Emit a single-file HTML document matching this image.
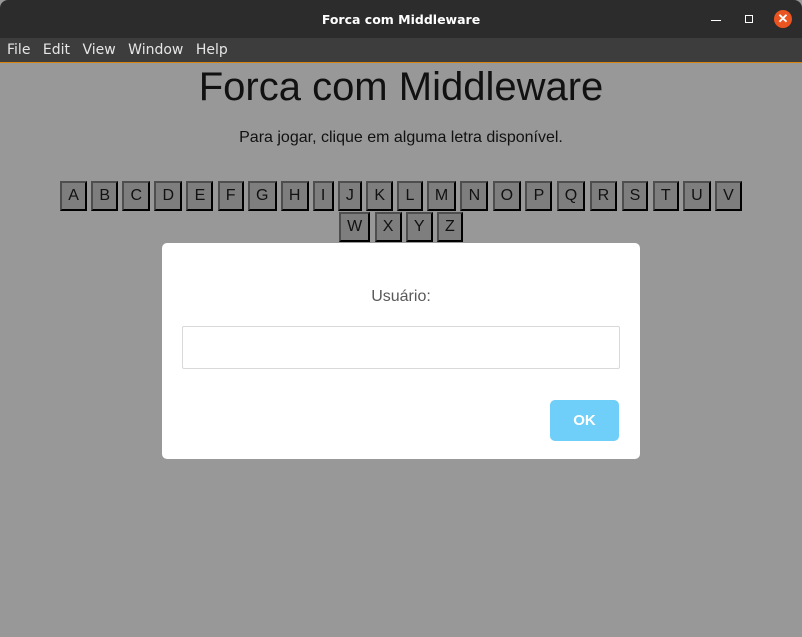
<!DOCTYPE html>
<html><head><style>
*{margin:0;padding:0;box-sizing:border-box}
body{width:802px;height:637px;overflow:hidden;background:#989898;font-family:"Liberation Sans",sans-serif;position:relative}
.title{position:absolute;left:0;top:0;width:802px;height:38px;background:#2c2c2c;border-radius:8px 8px 0 0;color:#fff;font-family:"DejaVu Sans",sans-serif;font-weight:bold;font-size:12.5px;text-align:center;line-height:40px}
.menu{position:absolute;left:0;top:38px;width:802px;height:24px;background:#3d3d3d;color:#e6e6e6;font-family:"DejaVu Sans",sans-serif;font-size:14px;line-height:25px;padding-left:7px}
.menu span{margin-right:8px}
.orange{position:absolute;left:0;top:62px;width:802px;height:1px;background:#d7850c}
.win{position:absolute;top:0;font-size:12px;color:#fff}
h1{position:absolute;top:65px;width:802px;text-align:center;font-weight:normal;font-size:40px;color:#111}
p{position:absolute;top:129px;width:802px;text-align:center;font-size:16px;color:#111}
.letters{position:absolute;top:181px;left:50px;width:702px;text-align:center;font-size:0}
.letters b{display:inline-block;font-weight:normal;font-size:16px;height:30px;line-height:26px;padding:0 6.15px;margin:0 2.1px 1px 2.1px;border:2px outset #555;background:#7e7e7e;color:#111;border-color:#4e4e4e #1f1f1f #1f1f1f #4e4e4e}
.dlg{position:absolute;left:162px;top:243px;width:478px;height:216px;background:#fff;border-radius:5px}
.lbl{position:absolute;top:45px;width:100%;text-align:center;font-size:16px;color:#595959}
.inp{position:absolute;left:20px;top:83px;width:438px;height:43px;border:1px solid #d9d9d9;border-radius:2px}
.ok{position:absolute;left:388px;top:157px;width:69px;height:41px;background:#6fcff8;border-radius:5px;color:#fff;font-weight:bold;font-size:15px;text-align:center;line-height:41px}
</style></head><body>
<div class="title">Forca com Middleware</div>
<div class="win" style="left:711px;top:20px;width:10px;height:1px;background:#fff"></div>
<div class="win" style="left:745px;top:15px;width:8px;height:8px;border:1px solid #fff"></div>
<div class="win" style="left:774px;top:10px;width:18px;height:18px;border-radius:50%;background:#e95420;text-align:center;line-height:18px;font-size:13px;font-weight:bold">✕</div>
<div class="menu"><span>File</span> <span>Edit</span> <span>View</span> <span>Window</span> <span>Help</span></div>
<div class="orange"></div>
<h1>Forca com Middleware</h1>
<p>Para jogar, clique em alguma letra disponível.</p>
<div class="letters"><b>A</b><b>B</b><b>C</b><b>D</b><b>E</b><b>F</b><b>G</b><b>H</b><b>I</b><b>J</b><b>K</b><b>L</b><b>M</b><b>N</b><b>O</b><b>P</b><b>Q</b><b>R</b><b>S</b><b>T</b><b>U</b><b>V</b><b>W</b><b>X</b><b>Y</b><b>Z</b></div>
<div class="dlg"><div class="lbl">Usuário:</div><div class="inp"></div><div class="ok">OK</div></div>
</body></html>
